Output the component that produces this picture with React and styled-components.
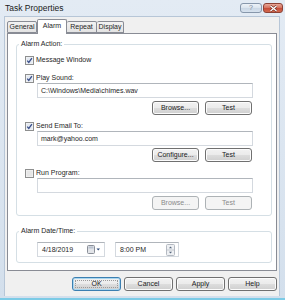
import styled, { createGlobalStyle } from 'styled-components'

const Global = createGlobalStyle`
  html, body { margin: 0; padding: 0; background: #fff; }
  body { font-family: "Liberation Sans", Arial, sans-serif; font-size: 7px; line-height: 10px; color: #262626; }
`

const Window = styled.div`
  width: 285px;
  height: 300px;
  box-sizing: border-box;
  background: linear-gradient(#e3ebf4, #d3dfec);
  padding: 0 5px 2px 4px;
  border-bottom: 2px solid #7ccbe6;
  display: flex;
  flex-direction: column;
`

const TitleBar = styled.div`
  height: 16px;
  display: flex;
  align-items: center;
  justify-content: space-between;
  margin-right: -3px;
`

const Title = styled.div`
  font-size: 8.5px;
  padding-left: 1px;
  color: #1a1a1a;
`

const Controls = styled.div`
  display: flex;
  gap: 1px;
  align-self: flex-start;
  margin-top: 3px;
`

const CapButton = styled.div`
  width: ${(p) => p.w}px;
  height: 10px;
  box-sizing: border-box;
  border-radius: 3px;
  border: 1px solid ${(p) => (p.close ? '#8d4236' : '#8797ab')};
  background: ${(p) =>
    p.close
      ? 'linear-gradient(#e9a898, #d4705d 50%, #c64b38 51%, #d36a4f)'
      : 'linear-gradient(#edf2f8, #dbe4ee 50%, #cad7e5 51%, #d7e2ee)'};
  display: flex;
  align-items: center;
  justify-content: center;
  font-size: 7px;
  line-height: 8px;
  color: #7a8797;
`

const Client = styled.div`
  flex: 1;
  background: #f0f0f0;
  border: 1px solid #b7c6d7;
  border-bottom: none;
  padding: 2px 2px 0 2px;
  display: flex;
  flex-direction: column;
`

const TabStrip = styled.div`
  display: flex;
  height: 14px;
  align-items: flex-end;
  position: relative;
  z-index: 1;
`

const Tab = styled.div`
  width: ${(p) => p.w}px;
  box-sizing: border-box;
  height: ${(p) => (p.active ? 15 : 12)}px;
  margin-bottom: ${(p) => (p.active ? -1 : 0)}px;
  border: 1px solid #898c95;
  border-bottom: ${(p) => (p.active ? 'none' : '1px solid #898c95')};
  border-left: ${(p) => (p.first || p.active ? '1px solid #898c95' : 'none')};
  border-radius: 2px 2px 0 0;
  background: ${(p) => (p.active ? '#fff' : 'linear-gradient(#f2f2f2, #e3e3e3)')};
  text-align: center;
  line-height: ${(p) => (p.active ? 12 : 10)}px;
`

const Panel = styled.div`
  background: #fff;
  border: 1px solid #898c95;
  height: 238px;
  box-sizing: border-box;
  padding: 5px 4px 0 8px;
  display: flex;
  flex-direction: column;
`

const Group = styled.fieldset`
  margin: ${(p) => p.top || 0}px 0 0 0;
  padding: 0 18px 5px 8px;
  border: 1px solid #d5dfe5;
  border-radius: 3px;
  display: flex;
  flex-direction: column;
  min-width: 0;
`

const Legend = styled.legend`
  padding: 0 2px;
  margin-left: -6px;
  line-height: 10px;
`

const CheckRow = styled.label`
  display: flex;
  align-items: center;
  gap: 2px;
  height: 10px;
  margin-top: ${(p) => p.top}px;
`

const TextBox = styled.div`
  margin-left: 12px;
  height: 15px;
  box-sizing: border-box;
  border: 1px solid #d4d9df;
  border-top-color: #b0b5bb;
  background: #fff;
  padding-left: 3px;
  display: flex;
  align-items: center;
`

const ButtonRow = styled.div`
  display: flex;
  justify-content: flex-end;
  gap: ${(p) => p.gap}px;
  margin-top: ${(p) => p.top}px;
  padding-right: ${(p) => p.right || 0}px;
`

const Button = styled.div`
  width: ${(p) => p.w}px;
  height: 14px;
  box-sizing: border-box;
  border-radius: 3px;
  border: 1px solid ${(p) => (p.disabled ? '#adb2b5' : p.focus ? '#3c7fb1' : '#707070')};
  background: ${(p) =>
    p.disabled ? '#f4f4f4' : 'linear-gradient(#f2f2f2 0%, #ebebeb 50%, #dddddd 51%, #cfcfcf 100%)'};
  box-shadow: inset 0 0 0 1px ${(p) => (p.focus ? '#a8d6f0' : p.disabled ? '#f4f4f4' : '#fcfcfc')};
  color: ${(p) => (p.disabled ? '#8a8a8a' : '#1a1a1a')};
  display: flex;
  align-items: center;
  justify-content: center;
  position: relative;
  &::after {
    content: '';
    display: ${(p) => (p.focus ? 'block' : 'none')};
    position: absolute;
    inset: 2px;
    border: 1px dotted #9a9a9a;
  }
`

const PickerRow = styled.div`
  display: flex;
  gap: 10px;
  margin: 6px 0 0 12px;
`

const Picker = styled.div`
  width: ${(p) => p.w}px;
  height: 15px;
  box-sizing: border-box;
  border: 1px solid #d4d9df;
  border-top-color: #b0b5bb;
  background: #fff;
  display: flex;
  align-items: center;
  justify-content: space-between;
  padding: 0 3px 0 4px;
`

const Footer = styled.div`
  display: flex;
  justify-content: flex-end;
  gap: 3px;
  margin-top: 6px;
`

const Check = ({ on }) => (
  <svg width="9" height="9" viewBox="0 0 9 9">
    <rect x="0.5" y="0.5" width="8" height="8" fill="#f6f6f6" stroke="#8e8f8f" />
    <rect x="1.5" y="1.5" width="6" height="6" fill={on ? '#e4e9f1' : '#e6e6e6'} />
    {on && <path d="M2.2 4.6 L3.8 6.4 L6.9 2.2" stroke="#3a4f8a" strokeWidth="1.3" fill="none" />}
  </svg>
)

const CheckItem = ({ on, top, children }) => (
  <CheckRow top={top}>
    <Check on={on} />
    <span>{children}</span>
  </CheckRow>
)

const CalendarIcon = () => (
  <svg width="14" height="9" viewBox="0 0 14 9">
    <rect x="0.5" y="0.5" width="7" height="8" rx="1" fill="#e2e4e8" stroke="#8a8f98" />
    <rect x="1.5" y="1.5" width="5" height="2" fill="#b9c2cf" />
    <path d="M9.5 3.5 L13 3.5 L11.25 5.5 Z" fill="#2d4a7a" />
  </svg>
)

const Spinner = () => (
  <svg width="9" height="12" viewBox="0 0 9 12">
    <rect x="0.5" y="0.5" width="8" height="11" rx="1" fill="#eef0f3" stroke="#b5bac2" />
    <line x1="1" y1="6" x2="8" y2="6" stroke="#c3c8cf" />
    <path d="M3 4.2 L6 4.2 L4.5 2.6 Z" fill="#55657d" />
    <path d="M3 7.8 L6 7.8 L4.5 9.4 Z" fill="#55657d" />
  </svg>
)

const CloseGlyph = () => (
  <svg width="9" height="7" viewBox="0 0 9 7">
    <path d="M1.5 1 L7.5 6 M7.5 1 L1.5 6" stroke="#6e2a20" strokeWidth="2.4" />
    <path d="M1.5 1 L7.5 6 M7.5 1 L1.5 6" stroke="#fff" strokeWidth="1.3" />
  </svg>
)

export default function App() {
  return (
    <>
      <Global />
      <Window>
        <TitleBar>
          <Title>Task Properties</Title>
          <Controls>
            <CapButton w={22}>?</CapButton>
            <CapButton w={20} close>
              <CloseGlyph />
            </CapButton>
          </Controls>
        </TitleBar>
        <Client>
          <TabStrip>
            <Tab w={30} first>General</Tab>
            <Tab w={30} active>Alarm</Tab>
            <Tab w={30}>Repeat</Tab>
            <Tab w={27}>Display</Tab>
          </TabStrip>
          <Panel>
            <Group>
              <Legend>Alarm Action:</Legend>
              <CheckItem on top={6}>Message Window</CheckItem>
              <CheckItem on top={8}>Play Sound:</CheckItem>
              <TextBox>C:\Windows\Media\chimes.wav</TextBox>
              <ButtonRow gap={6} top={3} right={1}>
                <Button w={47}>Browse...</Button>
                <Button w={47}>Test</Button>
              </ButtonRow>
              <CheckItem on top={6}>Send Email To:</CheckItem>
              <TextBox>mark@yahoo.com</TextBox>
              <ButtonRow gap={6} top={2} right={1}>
                <Button w={47}>Configure...</Button>
                <Button w={47}>Test</Button>
              </ButtonRow>
              <CheckItem top={6}>Run Program:</CheckItem>
              <TextBox />
              <ButtonRow gap={6} top={3} right={1}>
                <Button w={47} disabled>Browse...</Button>
                <Button w={47} disabled>Test</Button>
              </ButtonRow>
            </Group>
            <Group top={10}>
              <Legend>Alarm Date/Time:</Legend>
              <PickerRow>
                <Picker w={68}>
                  <span>4/18/2019</span>
                  <CalendarIcon />
                </Picker>
                <Picker w={64}>
                  <span>8:00 PM</span>
                  <Spinner />
                </Picker>
              </PickerRow>
            </Group>
          </Panel>
          <Footer>
            <Button w={49} focus>OK</Button>
            <Button w={49}>Cancel</Button>
            <Button w={49}>Apply</Button>
            <Button w={49}>Help</Button>
          </Footer>
        </Client>
      </Window>
    </>
  )
}
